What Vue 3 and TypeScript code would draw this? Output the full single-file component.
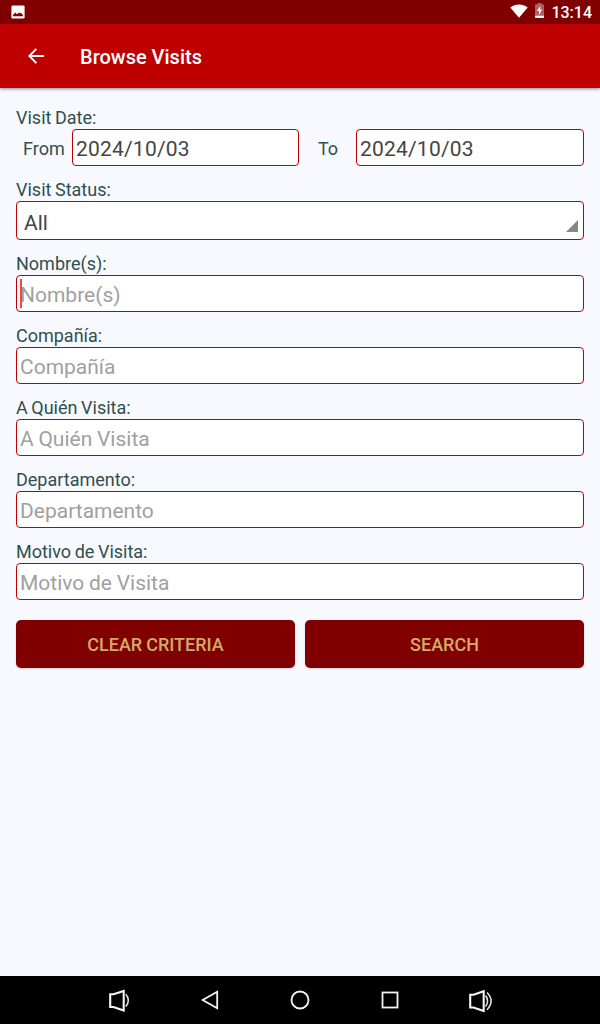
<script setup lang="ts">
import { ref } from 'vue'

interface Field {
  label: string
  focused: boolean
}

const fromDate = ref('2024/10/03')
const toDate = ref('2024/10/03')
const fields: Field[] = [
  { label: 'Nombre(s)', focused: true },
  { label: 'Compañía', focused: false },
  { label: 'A Quién Visita', focused: false },
  { label: 'Departamento', focused: false },
  { label: 'Motivo de Visita', focused: false },
]
</script>

<template>
  <div class="screen">
    <div class="status">
      <svg class="picture" width="14" height="14" viewBox="0 0 14 14">
        <rect x="0.4" y="0.4" width="13.2" height="13.2" rx="1.3" fill="#fff" />
        <path d="M2 11.200V10l2.300-2.400 1.600 1.700 2.100-1.900 1 1 .8-.9L12 10.300v.9z" fill="#800000" />
      </svg>
      <svg class="wifi" width="18" height="14" viewBox="0 0 18 14">
        <path d="M0.300 3.400C5.200-.6 12.800-.6 17.700 3.400L9 13.800z" fill="#fff" />
      </svg>
      <svg class="battery" width="9" height="15" viewBox="0 0 9 15">
        <path d="M2.600 0h3.800v1.300H8q1 0 1 1V13H0V2.300q0-1 1-1h1.600z" fill="#fff" fill-opacity=".38" />
        <path d="M0 12.800h9V14q0 1-1 1H1q-1 0-1-1z" fill="#fff" />
        <path d="M5.300 2.800 2 8h2v3.900L7 6.600H5z" fill="#fff" />
      </svg>
      <span class="clock">13:14</span>
    </div>

    <header class="bar">
      <svg class="back" width="16" height="16" viewBox="0 0 16 16">
        <path d="M8.400.9 1.300 8l7.100 7.100M1.300 8H16" fill="none" stroke="#fff" stroke-width="1.9" />
      </svg>
      <h1>Browse Visits</h1>
    </header>

    <main class="form">
      <div class="group">
        <div class="label">Visit Date:</div>
        <div class="dates">
          <span class="from">From</span>
          <div class="box">{{ fromDate }}</div>
          <span class="to">To</span>
          <div class="box">{{ toDate }}</div>
        </div>
      </div>
      <div class="group">
        <div class="label">Visit Status:</div>
        <div class="box select">
          <span>All</span>
          <svg width="12" height="12" viewBox="0 0 12 12"><path d="M12 0v12H0z" fill="#888" /></svg>
        </div>
      </div>
      <div v-for="field in fields" :key="field.label" class="group">
        <div class="label">{{ field.label }}:</div>
        <div class="box hint">
          <i v-if="field.focused" class="caret"></i>{{ field.label }}
        </div>
      </div>
      <div class="actions">
        <button type="button">CLEAR CRITERIA</button>
        <button type="button">SEARCH</button>
      </div>
    </main>

    <nav class="nav">
      <svg viewBox="0 0 30 30">
        <path d="M5.200 9.200h3.300L18.700 6v19.600L8.500 22H5.200z" class="line speaker" />
        <path d="M20.800 9.300q5.200 5.900 0 12.300" class="thin" />
      </svg>
      <svg viewBox="0 0 30 30"><path d="M22.200 6.700v16.600L7.700 15z" class="line" /></svg>
      <svg viewBox="0 0 30 30"><circle cx="15" cy="15" r="8.500" class="line" /></svg>
      <svg viewBox="0 0 30 30"><rect x="7.500" y="7.500" width="15" height="15" class="line" /></svg>
      <svg viewBox="0 0 30 30">
        <path d="M5.200 9.700h3.300L18.700 6.200v19.900L8.500 22.500H5.200z" class="line speaker" />
        <path d="M20.600 10.500q4 5.300 0 11M22 7.500q8.200 8.400 0 17.200" class="thin" />
      </svg>
    </nav>
  </div>
</template>

<style>
body {
  margin: 0;
}
</style>

<style scoped>
.screen {
  width: 600px;
  height: 1024px;
  display: flex;
  flex-direction: column;
  overflow: hidden;
  background: #f8f9ff;
  font-family: Roboto, sans-serif;
}
.status {
  height: 24px;
  flex: none;
  box-sizing: border-box;
  display: flex;
  align-items: flex-start;
  padding: 0 8px 0 11px;
  background: #800000;
  color: #fff;
}
.picture {
  margin-top: 5px;
}
.wifi {
  margin: 4px 7px 0 auto;
}
.battery {
  margin: 3px 7px 0 0;
}
.clock {
  font-size: 16px;
  font-weight: 500;
  line-height: 25px;
}
.bar {
  height: 64px;
  flex: none;
  box-sizing: border-box;
  display: flex;
  align-items: center;
  padding: 2px 28px 0;
  background: #bf0000;
  box-shadow: 0 1px 3px rgba(0, 0, 0, 0.45);
}
.bar svg {
  margin-top: -2px;
}
h1 {
  margin: 0 0 0 36px;
  color: #fff;
  font-size: 20px;
  font-weight: 500;
}
.form {
  flex: 1;
  padding: 19px 16px 0;
}
.group {
  margin-bottom: 13px;
}
.label,
.dates span {
  color: #2f4f4f;
  font-size: 18px;
  line-height: 22px;
  word-spacing: -0.9px;
}
.dates {
  display: grid;
  grid-template-columns: 56px 227px 57px 228px;
  align-items: center;
}
.dates span {
  padding-top: 2px;
}
.dates .from {
  padding-left: 7px;
}
.dates .to {
  padding-left: 19px;
}
.box {
  box-sizing: border-box;
  height: 37px;
  padding: 1px 3px 0;
  border: 1px solid #bf0000;
  border-radius: 4px;
  background: #fff;
  color: #444;
  font-size: 21px;
  line-height: 36px;
}
.dates .box {
  letter-spacing: 0.2px;
}
.select {
  height: 39px;
  padding: 2px 5px 0 7px;
  line-height: 38px;
  display: flex;
  justify-content: space-between;
}
.select svg {
  margin-top: 16px;
}
.hint {
  position: relative;
  color: #a0a0a0;
  word-spacing: -0.5px;
}
.caret {
  position: absolute;
  left: 3px;
  top: 3px;
  width: 2px;
  height: 29px;
  background: #ff4046;
}
.actions {
  display: flex;
  gap: 10px;
  margin-top: 20px;
}
button {
  flex: 1;
  height: 48px;
  padding: 0;
  border: 0;
  border-radius: 5px;
  background: #800000;
  box-shadow: 0 1px 2px rgba(0, 0, 0, 0.15);
  color: #d4aa6a;
  font: 500 18px Roboto, sans-serif;
  word-spacing: -0.5px;
}
.nav {
  height: 48px;
  flex: none;
  display: flex;
  justify-content: center;
  align-items: center;
  gap: 60px;
  background: #000;
}
.nav svg {
  width: 30px;
  height: 30px;
}
.line {
  fill: none;
  stroke: #f5f5f5;
  stroke-width: 1.8;
}
.speaker {
  stroke-width: 2.1;
}
.thin {
  fill: none;
  stroke: #e8e8e8;
  stroke-width: 1.5;
}
</style>
